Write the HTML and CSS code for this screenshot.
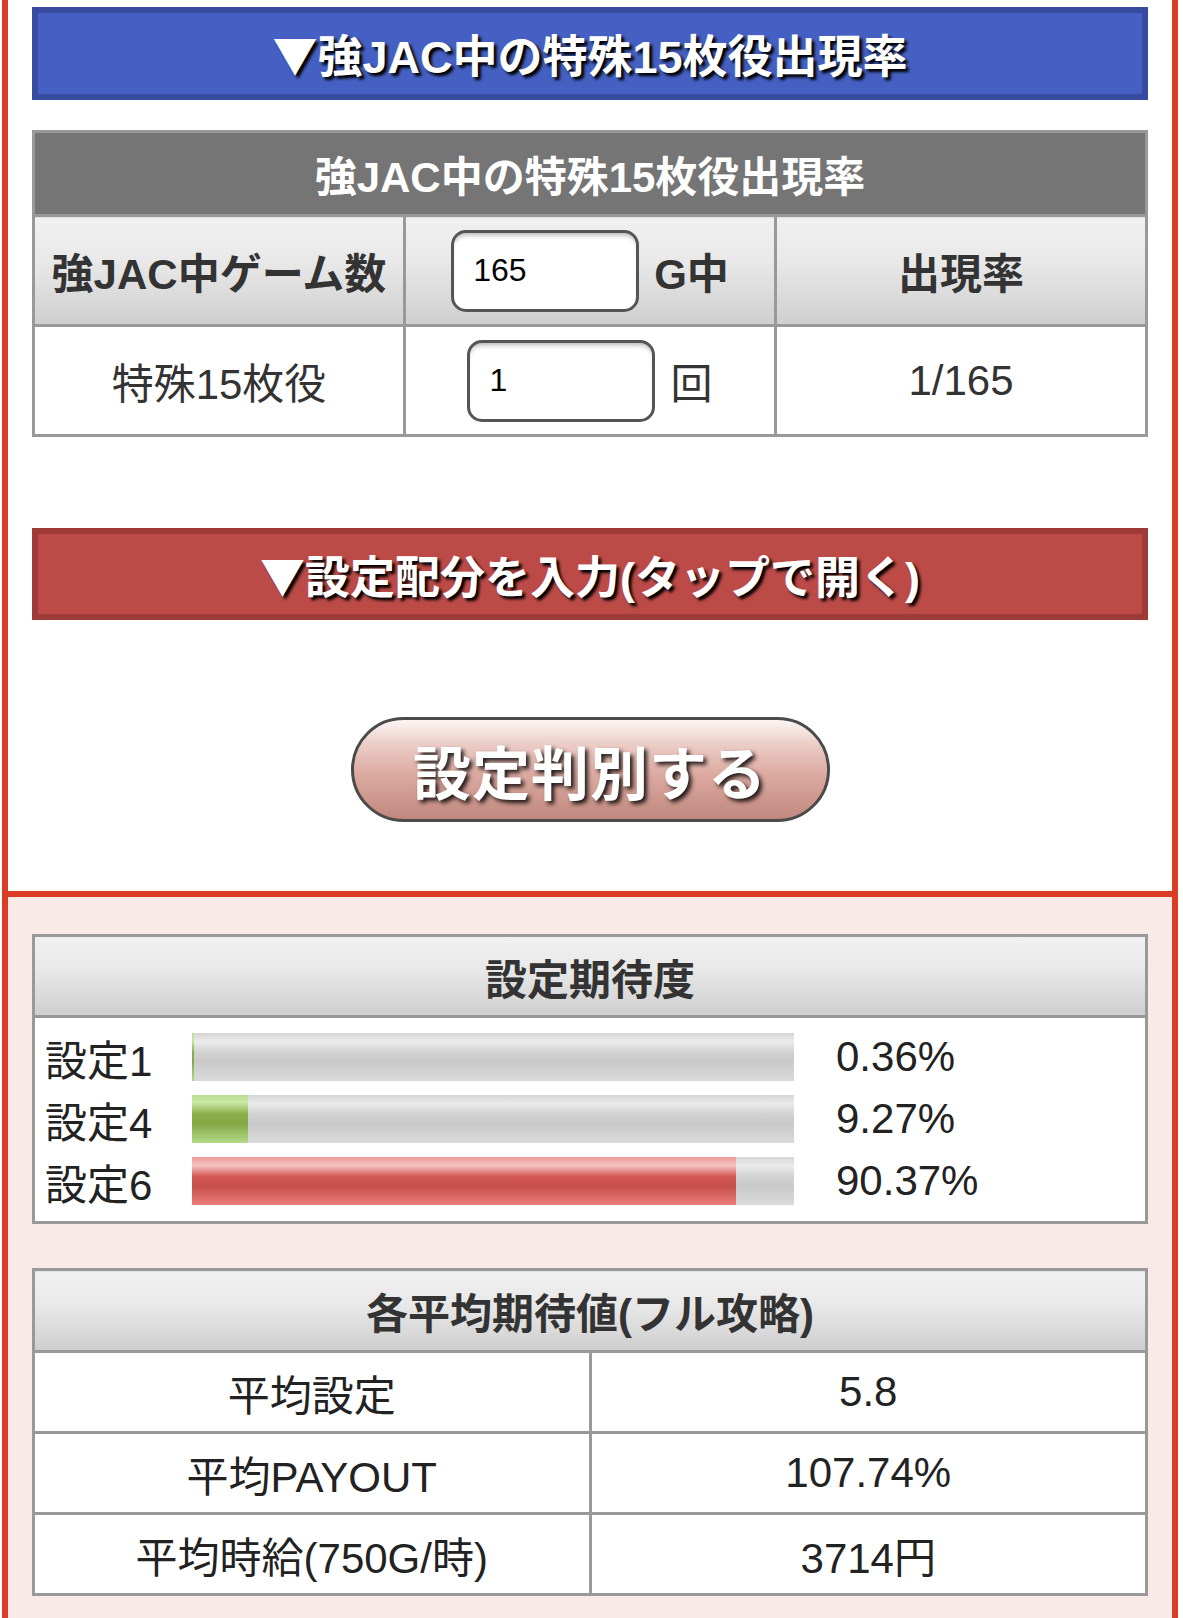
FILE: index.html
```html
<!DOCTYPE html>
<html lang="ja">

<head>
  <meta charset="UTF-8">
  <meta name="viewport" content="width=device-width, initial-scale=1.0">
  <title>強JAC中の特殊15枚役出現率 | 設定判別</title>
  <link rel="stylesheet" href="styles.css">
</head>

<body>
  <div class="page">
    <section class="panel">
      <h2 class="bar bar-blue"><span class="tri">▼</span>強JAC中の特殊15枚役出現率</h2>

      <table class="calc">
        <tr>
          <th class="dark" colspan="3">強JAC中の特殊15枚役出現率</th>
        </tr>
        <tr>
          <th class="light">強JAC中ゲーム数</th>
          <th class="light"><input class="num" type="text" value="165"><span class="unit bold">G中</span></th>
          <th class="light">出現率</th>
        </tr>
        <tr>
          <td>特殊15枚役</td>
          <td><input class="num" type="text" value="1"><span class="unit">回</span></td>
          <td>1/165</td>
        </tr>
      </table>

      <h2 class="bar bar-red"><span class="tri">▼</span>設定配分を入力(タップで開く)</h2>

      <div class="action">
        <button class="judge" type="button">設定判別する</button>
      </div>
    </section>

    <section class="result">
      <div class="expect">
        <div class="light head">設定期待度</div>
        <div class="rows">
          <div class="label">設定1</div>
          <div class="track"><div class="fill green" style="width: 0.36%"></div></div>
          <div class="pct">0.36%</div>

          <div class="label">設定4</div>
          <div class="track"><div class="fill green" style="width: 9.27%"></div></div>
          <div class="pct">9.27%</div>

          <div class="label">設定6</div>
          <div class="track"><div class="fill red" style="width: 90.37%"></div></div>
          <div class="pct">90.37%</div>
        </div>
      </div>

      <table class="avg">
        <tr>
          <th class="light" colspan="2">各平均期待値(フル攻略)</th>
        </tr>
        <tr>
          <td>平均設定</td>
          <td>5.8</td>
        </tr>
        <tr>
          <td>平均PAYOUT</td>
          <td>107.74%</td>
        </tr>
        <tr>
          <td>平均時給(750G/時)</td>
          <td>3714円</td>
        </tr>
      </table>
    </section>
  </div>
</body>

</html>
```

FILE: styles.css
```css
* {
  box-sizing: border-box;
}

body {
  margin: 0;
  background: #fff;
  font-family: "Liberation Sans", "Noto Sans CJK JP", sans-serif;
  color: #333;
}

.page {
  width: 1176px;
  margin-left: 2px;
}

.panel {
  border: 6px solid #db3d24;
  border-top: 0;
  padding: 7px 24px 69px;
  background: #fff;
}

.result {
  border: 6px solid #db3d24;
  border-top: 0;
  border-bottom: 0;
  padding: 37px 24px 30px;
  background: #f9eae7;
}

.bar {
  margin: 0;
  height: 93px;
  display: flex;
  align-items: center;
  justify-content: center;
  font-size: 45px;
  font-weight: bold;
  color: #fff;
  text-shadow: 3px 3px 3px #000;
}

.tri {
  font-family: "Noto Sans CJK JP", sans-serif;
}

.bar-blue {
  background: #4560c2;
  border: 6px solid #374ba0;
}

.bar-red {
  height: 92px;
  margin-top: 91px;
  background: #bc4b48;
  border: 6px solid #9e3a38;
}

table {
  width: 100%;
  border-collapse: collapse;
  table-layout: fixed;
  background: #fff;
}

th,
td {
  border: 3px solid #999;
  padding: 0;
  text-align: center;
  vertical-align: middle;
  font-size: 42px;
}

th {
  font-weight: bold;
}

td {
  font-weight: normal;
}

.light {
  background: linear-gradient(#f0f0f0, #e9e9e9 40%, #cfcfcf);
  color: #333;
}

.calc {
  margin-top: 30px;
}

.calc .dark {
  height: 84px;
  background: #757575;
  color: #fff;
}

.calc tr:nth-child(2) th,
.calc td {
  height: 110px;
}

.num {
  width: 188px;
  height: 82px;
  border: 3px solid #555;
  border-radius: 15px;
  padding: 0 0 0 19px;
  font-family: "Liberation Sans", sans-serif;
  font-size: 32px;
  color: #000;
  background: #fff;
  box-shadow: inset 0 5px 5px -3px rgba(0, 0, 0, .3);
  vertical-align: middle;
  outline: none;
}

.unit {
  display: inline-block;
  margin-left: 15px;
  vertical-align: middle;
  font-weight: normal;
}

.unit.bold {
  font-weight: bold;
}

.action {
  display: flex;
  justify-content: center;
  margin-top: 97px;
}

.judge {
  width: 479px;
  height: 105px;
  border: 3px solid #4b4b4b;
  border-radius: 53px;
  background: linear-gradient(#fdf5f4, #ecccc6 25%, #dcaaa1 55%, #c1887e);
  font-family: "Liberation Sans", "Noto Sans CJK JP", sans-serif;
  font-size: 58px;
  font-weight: bold;
  color: #fff;
  text-shadow: 3px 3px 4px rgba(0, 0, 0, .85);
  letter-spacing: 1px;
}

.expect {
  border: 3px solid #999;
  background: #fff;
}

.expect .head {
  height: 81px;
  border-bottom: 3px solid #999;
  display: flex;
  align-items: center;
  justify-content: center;
  font-size: 42px;
  font-weight: bold;
}

.rows {
  display: grid;
  grid-template-columns: 147px 602px 1fr;
  grid-auto-rows: 48px;
  row-gap: 14px;
  align-items: center;
  padding: 15px 0 16px 10px;
  font-size: 42px;
  color: #222;
}

.pct {
  padding-left: 42px;
}

.track {
  height: 48px;
  background: linear-gradient(#d6d6d6, #ebebeb 18%, #d2d2d2 40%, #c9c9c9 60%, #dadada);
}

.fill {
  height: 100%;
}

.fill.green {
  background: linear-gradient(#b9df8e, #c9e8a4 15%, #8aaf4a 40%, #84a744 60%, #b3da86);
}

.fill.red {
  background: linear-gradient(#ee9a9a, #f6c2c2 18%, #d35a55 40%, #c74f49 60%, #ea7d7a);
}

.avg {
  margin-top: 44px;
}

.avg th {
  height: 82px;
}

.avg td {
  height: 81px;
  color: #222;
}
```
